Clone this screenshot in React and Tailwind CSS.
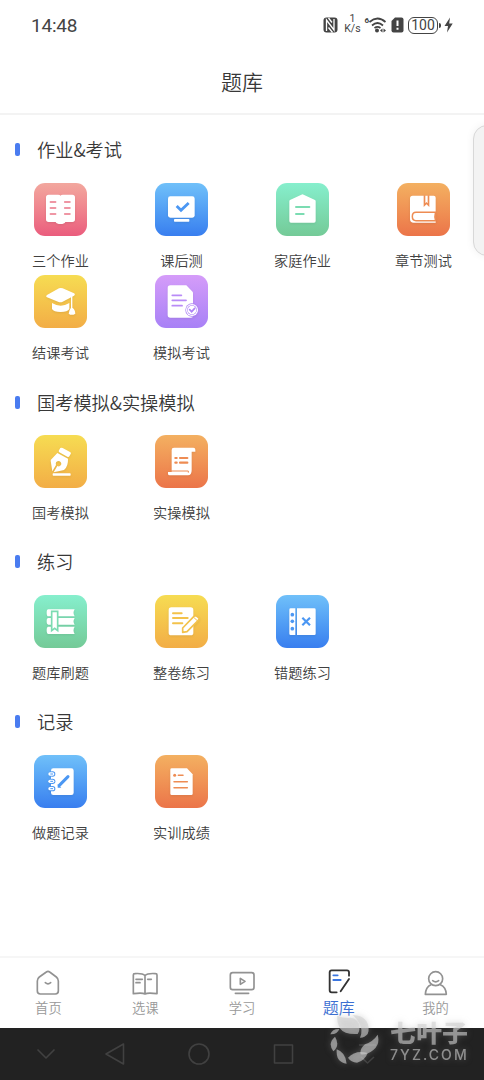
import clsx from "clsx";

const TILE = {
  pink: "from-[#f2a79e] to-[#ea5c7d] text-[#ea7486]",
  blue: "from-[#70c0f9] to-[#397eef] text-[#4b97f3]",
  green: "from-[#86efcd] to-[#74ca97] text-[#7bdcb2]",
  orange: "from-[#f3b061] to-[#eb7449] text-[#ee8c53]",
  yellow: "from-[#f6dc52] to-[#f2ad46] text-[#f3c24b]",
  purple: "from-[#d59cf9] to-[#a881f6] text-[#b98bf7]",
};

// Glyphs share a 159 unit box, white shapes with tile coloured details
const GLYPHS = {
  openBook: (
    <>
      <path fill="#fff" d="M44 35H72Q78 35 79.500 38Q81 35 87 35H115Q123 35 123 43V109Q123 117 115 117H94Q91 123 79.500 123Q68 123 65 117H44Q36 117 36 109V43Q36 35 44 35Z" />
      <path d="M49 57H65M49 75H65M49 93H65M92 57H108M92 75H108M92 93H108" stroke="currentColor" strokeWidth="4.500" strokeLinecap="round" />
    </>
  ),
  monitor: (
    <>
      <rect x="39" y="40" width="80" height="64" rx="7" fill="#fff" />
      <rect x="57" y="108" width="46" height="8" rx="2" fill="#fff" />
      <path d="M65 69L78 82L101 60" fill="none" stroke="currentColor" strokeWidth="8.500" />
    </>
  ),
  house: (
    <>
      <path fill="#fff" d="M42 51L76 35Q79.500 33 83 35L117 51Q119 52 119 55V114Q119 119 114 119H45Q40 119 40 114V55Q40 52 42 51Z" />
      <path d="M60 72H100M60 93H83" stroke="currentColor" strokeWidth="6" strokeLinecap="round" />
    </>
  ),
  closedBook: (
    <>
      <path fill="#fff" d="M47 38H110Q116 38 116 44V119H50Q39 119 39 107V46Q39 38 47 38Z" />
      <path d="M80 37V72L88.500 64L97 72V37H92V61L88.500 57L85 61V37Z" fill="currentColor" />
      <path d="M117 88H57Q46 88 46 100.500Q46 113 57 113H117" fill="none" stroke="currentColor" strokeWidth="4.500" />
      <path d="M113 90Q110 101 113 111H118V90Z" fill="currentColor" />
    </>
  ),
  cap: (
    <>
      <path fill="#fff" d="M39 60L75 40Q80 38 86 40L120 55Q125 58 120 62L86 80Q80 83 74 81L39 67Q34 64 39 60Z" />
      <path fill="#fff" d="M54 84Q80 100 106 84V102Q101 111 80 111Q59 111 54 102Z" />
      <path fill="#fff" d="M111 66L115 64V98Q123 103 124 116Q113 123 104 116Q106 103 111 98Z" />
    </>
  ),
  docCheck: (
    <>
      <path fill="#fff" d="M46 31H94L114 52V122Q114 128 108 128H46Q38 128 38 120V39Q38 31 46 31Z" />
      <path d="M52 61H79M52 76H93M52 92H81" stroke="currentColor" strokeWidth="5.500" strokeLinecap="round" />
      <circle cx="111" cy="105" r="20" fill="#ae83f6" />
      <circle cx="111" cy="105" r="18" fill="#fff" />
      <circle cx="111" cy="105" r="14.500" fill="#ae83f6" />
      <circle cx="111" cy="105" r="13" fill="#fff" />
      <path d="M104 104L110 110L119 100" fill="none" stroke="#ae83f6" strokeWidth="5" strokeLinecap="round" />
    </>
  ),
  pen: (
    <>
      <path fill="#fff" d="M79 39Q82 37 86 39L108 51Q112 53 110 57L106 64Q104 67 100 65L76 52Q73 50 75 46Z" />
      <path fill="#fff" d="M70 54L102 71Q103 94 90 105L59 112L70 93Q78 97 82 88Q82 79 73 78Q63 80 66 90L55 109L50 77Q50 74 53 72Z" />
      <rect x="56" y="115" width="54" height="7" rx="2" fill="#fff" />
    </>
  ),
  scroll: (
    <>
      <path fill="#fff" d="M57 38H115Q121 38 121 44V50H110V106Q110 121 99 121H44Q39 121 39 116V111H50V45Q50 38 57 38Z" />
      <path d="M39 108H100V113" fill="none" stroke="currentColor" strokeWidth="3" />
      <path d="M61 69H65M75 69H97M61 83H65M75 83H97" stroke="currentColor" strokeWidth="6.500" strokeLinecap="round" />
    </>
  ),
  books: (
    <>
      <path fill="#fff" d="M43 43H122Q115 53 122 64H43Q38 64 38 53Q38 43 43 43ZM43 69H122Q115 79 122 89H43Q38 89 38 79Q38 69 43 69ZM43 95H122Q115 106 122 117H43Q38 117 38 106Q38 95 43 95Z" />
      <path d="M53 49H71V107L62 100L53 107Z" fill="#fff" stroke="currentColor" strokeWidth="5" />
    </>
  ),
  notePencil: (
    <>
      <rect x="41" y="37" width="74" height="84" rx="8" fill="#fff" />
      <path d="M54 55H80M54 69H98M54 85H82" stroke="currentColor" strokeWidth="6" strokeLinecap="round" />
      <path d="M83 99L116 65L122 61L133 70L129 77L96 110L83 112Z" fill="#fff" stroke="currentColor" strokeWidth="5" strokeLinejoin="round" />
      <path d="M115 66L128 78" stroke="currentColor" strokeWidth="3" />
    </>
  ),
  wrongBook: (
    <>
      <path fill="#fff" d="M44 40H58V120H44Q40 120 40 116V44Q40 40 44 40ZM63 40H115Q119 40 119 44V116Q119 120 115 120H63Z" />
      <g fill="currentColor">
        <circle cx="49" cy="59" r="5.500" />
        <circle cx="49" cy="79" r="5.500" />
        <circle cx="49" cy="101" r="5.500" />
      </g>
      <path d="M79 68L102 91M102 68L79 91" stroke="currentColor" strokeWidth="6.500" />
    </>
  ),
  notebook: (
    <>
      <path fill="#fff" d="M58 40H112Q119 40 119 47V113Q119 120 112 120H58Q51 120 51 113V47Q51 40 58 40Z" />
      {[57, 79, 101].map((y) => (
        <g key={y}>
          <rect x="46" y={y - 8} width="18" height="16" rx="8" fill="currentColor" />
          <rect x="43" y={y - 5} width="18" height="10" rx="5" fill="#fff" />
          <path d={`M49 ${y}H57`} stroke="currentColor" strokeWidth="3" />
        </g>
      ))}
      <path d="M76 91L102 65" stroke="currentColor" strokeWidth="9" strokeLinecap="round" />
      <path d="M71 87V98H82Z" fill="currentColor" />
    </>
  ),
  report: (
    <>
      <path fill="#fff" d="M50 40H96L113 58V116Q113 120 109 120H50Q46 120 46 116V44Q46 40 50 40Z" />
      <circle cx="59" cy="61" r="4.500" fill="currentColor" />
      <path d="M70 61H84M57 80H97M57 98H97" stroke="currentColor" strokeWidth="4.500" strokeLinecap="round" />
    </>
  ),
};

const SECTIONS = [
  {
    title: "作业&考试",
    items: [
      { label: "三个作业", color: "pink", glyph: "openBook" },
      { label: "课后测", color: "blue", glyph: "monitor" },
      { label: "家庭作业", color: "green", glyph: "house" },
      { label: "章节测试", color: "orange", glyph: "closedBook" },
      { label: "结课考试", color: "yellow", glyph: "cap" },
      { label: "模拟考试", color: "purple", glyph: "docCheck" },
    ],
  },
  {
    title: "国考模拟&实操模拟",
    items: [
      { label: "国考模拟", color: "yellow", glyph: "pen" },
      { label: "实操模拟", color: "orange", glyph: "scroll" },
    ],
  },
  {
    title: "练习",
    items: [
      { label: "题库刷题", color: "green", glyph: "books" },
      { label: "整卷练习", color: "yellow", glyph: "notePencil" },
      { label: "错题练习", color: "blue", glyph: "wrongBook" },
    ],
  },
  {
    title: "记录",
    items: [
      { label: "做题记录", color: "blue", glyph: "notebook" },
      { label: "实训成绩", color: "orange", glyph: "report" },
    ],
  },
];

const TABS = [
  {
    label: "首页",
    icon: <path d="M37 9Q42 5 47 9L67 24Q73 29 73 36V66Q73 75 64 75H19Q10 75 10 66V36Q10 29 16 24ZM34 41Q42 48 50 41" />,
  },
  {
    label: "选课",
    icon: <path d="M42 20Q34 12 11 14Q7 14 7 18V74Q34 70 42 75Q50 70 78 74V18Q78 14 74 14Q50 12 42 20ZM42 20V75M15 31H34M15 41H27M50 31H61" />,
  },
  {
    label: "学习",
    icon: <path d="M14 11H71Q78 11 78 18V55Q78 62 71 62H14Q7 62 7 55V18Q7 11 14 11ZM22 73H62M37 28V46L51 37Z" />,
  },
  {
    label: "题库",
    active: true,
    icon: (
      <>
        <path d="M72 20V10Q72 4 66 4H20Q14 4 14 10V64Q14 70 20 70H35M72 30L47 67" stroke="#333" strokeWidth="5.500" />
        <path d="M25 19H38M25 33H47" stroke="#3b76e0" strokeWidth="5.500" />
      </>
    ),
  },
  {
    label: "我的",
    icon: (
      <>
        <circle cx="41" cy="29" r="21" />
        <path d="M32 35Q41 42 50 35M27 47Q11 54 10 76H73Q72 54 55 47" />
      </>
    ),
  },
];

function StatusBar() {
  return (
    <div className="flex h-[50px] items-center justify-between pl-[31px] pr-[31px] font-[Roboto] font-normal text-[#444]">
      <span className="text-[19px] leading-none tracking-[-0.2px]">14:48</span>
      <div className="flex items-center">
        <svg className="h-4 w-[15px]" viewBox="0 0 15 16" fill="none" stroke="currentColor">
          <rect x="0.500" y="0.500" width="14" height="15" rx="3" fill="currentColor" stroke="none" />
          <path d="M3.500 14V3L11 13V2M5.500 1L9 5.500M5.500 10.500L9.500 15.500" stroke="#fff" strokeWidth="1.300" />
        </svg>
        <div className="ml-[5px] mt-px flex w-[18px] flex-col items-center text-[10.5px] leading-[12px]">
          <span className="-mt-1">1</span>
          <span className="-mt-[2px]">K/s</span>
        </div>
        <span className="mb-[9px] ml-[3px] text-[8px] font-bold leading-none">6</span>
        <svg className="h-[18px] w-[18px]" viewBox="0 0 18 18" fill="none" stroke="currentColor" strokeWidth="1.700">
          <path d="M0.500 6Q8.500 -1 16.500 6M3 9.500Q8.500 4.500 14 9.500M5.500 12Q8.500 9.800 11.500 12" />
          <circle cx="8" cy="14.500" r="2" fill="currentColor" stroke="none" />
          <path d="M11 14.500L13.500 12.500V16.500ZM17 14.500L14.500 12.500V16.500Z" fill="currentColor" stroke="none" />
        </svg>
        <svg className="ml-[4px] h-4 w-[13px]" viewBox="0 0 13 16">
          <path d="M4 0.500H10.500Q12.500 0.500 12.500 2.500V13.500Q12.500 15.500 10.500 15.500H2.500Q0.500 15.500 0.500 13.500V4Z" fill="currentColor" />
          <path d="M6.500 3.500V9M6.500 10.800V12.800" stroke="#fff" strokeWidth="2" />
        </svg>
        <div className="ml-[4px] flex h-[17px] w-[30px] items-center justify-center rounded-[6px] border-[1.5px] border-[#444] text-[14px] leading-none">
          100
        </div>
        <div className="ml-px h-[5px] w-[2px] rounded-r-sm bg-[#444]" />
        <svg className="ml-[3px] h-[16px] w-[9px]" viewBox="0 0 9 16">
          <path d="M6 0.500L0.500 9H4L3 15.500L8.700 6.500H5.200Z" fill="currentColor" />
        </svg>
      </div>
    </div>
  );
}

function Tile({ item }) {
  return (
    <div className="flex h-[92.7px] flex-col items-center">
      <div className={clsx("h-[53px] w-[53px] rounded-[11px] bg-gradient-to-b", TILE[item.color])}>
        <svg className="h-full w-full drop-shadow-[0_1px_1px_rgba(0,0,0,0.08)]" viewBox="0 0 159 159">
          {GLYPHS[item.glyph]}
        </svg>
      </div>
      <span className="mt-[14px] text-[14.2px] leading-5 text-[#404040]">{item.label}</span>
    </div>
  );
}

function Section({ section }) {
  return (
    <section>
      <div className="flex h-[67.2px] items-center pl-[15px]">
        <span className="mt-px h-[13px] w-[5px] rounded-[2px] bg-[#4a7cf0]" />
        <h2 className="ml-[17px] text-[18.2px] leading-6 text-[#383838]">{section.title}</h2>
      </div>
      <div className="grid grid-cols-4">
        {section.items.map((item) => (
          <Tile key={item.label} item={item} />
        ))}
      </div>
    </section>
  );
}

function TabBar() {
  return (
    <nav className="grid h-[72px] grid-cols-5 border-t-2 border-[#f6f6f6] bg-white pt-[11px]">
      {TABS.map((tab) => (
        <div key={tab.label} className="flex flex-col items-center">
          <svg
            className="h-7 w-7"
            viewBox="0 0 84 84"
            fill="none"
            stroke="#929292"
            strokeWidth="5"
            strokeLinecap="round"
            strokeLinejoin="round"
          >
            {tab.icon}
          </svg>
          <span className={clsx("leading-5", tab.active ? "text-[16px] text-[#3c6fd2]" : "mt-px text-[13.3px] text-[#999]")}>
            {tab.label}
          </span>
        </div>
      ))}
    </nav>
  );
}

function SystemBar() {
  return (
    <div className="h-[52px] bg-[#222]">
      <svg className="h-[52px] w-[400px]" viewBox="0 0 400 52" fill="none" stroke="#414141" strokeWidth="1.600" strokeLinejoin="round">
        <path d="M37.500 21.500L46 30L54.500 21.500" />
        <path d="M123.500 16V36L106 26Z" />
        <circle cx="199" cy="26" r="10" />
        <rect x="274.500" y="17" width="18" height="18" />
        <path d="M359 17H376M361 29L367.500 35L374 29" />
      </svg>
    </div>
  );
}

function Watermark() {
  return (
    <div className="absolute bottom-[14px] left-[330px] flex items-start drop-shadow-[0_0_3px_rgba(150,150,150,0.6)]">
      <svg className="h-[52px] w-[50px]" viewBox="0 0 150 156" fill="#d0d0d0" fillOpacity="0.6">
        <path d="M22 5Q45 15 62 11Q82 14 87 31Q91 49 83 60Q43 62 31 44Q20 26 22 5Z" />
        <path d="M68 3Q96 3 109 21Q121 40 113 60Q103 72 90 71Q100 50 88 27Q81 14 68 3Z" />
        <path d="M143 62Q151 90 131 107Q112 123 92 121Q88 105 105 91Q130 82 143 62Z" />
        <path d="M54 131Q77 107 113 117Q105 140 81 146Q63 145 54 131Z" />
        <path d="M20 106Q47 115 50 149Q17 146 20 106Z" />
        <path d="M15 68Q31 94 10 112Q-8 88 15 68Z" />
        <path d="M28 45Q22 62 1 61Q7 44 28 45Z" />
      </svg>
      <div className="ml-[10px] mt-[6px] flex flex-col text-[#d0d0d0]/60">
        <span className="origin-center scale-y-90 text-[26px] font-black leading-[24px]">七叶子</span>
        <span className="mt-[3px] font-[Inter] text-[14px] font-medium leading-[16px] tracking-[2.1px]">7YZ.COM</span>
      </div>
    </div>
  );
}

export default function App() {
  return (
    <div className="relative flex h-[1080px] w-[484px] flex-col overflow-hidden bg-white font-['Noto_Sans_CJK_SC',sans-serif] font-[350]">
      <StatusBar />
      <header className="flex h-[65.4px] items-center justify-center border-b-2 border-[#f3f3f3] pb-[2px]">
        <h1 className="text-[21px] leading-7 text-[#383838]">题库</h1>
      </header>
      <main className="flex-1">
        {SECTIONS.map((section) => (
          <Section key={section.title} section={section} />
        ))}
      </main>
      <TabBar />
      <SystemBar />

      {/* Edge panel handle */}
      <div className="absolute left-[473px] top-[125px] h-[131px] w-[30px] rounded-[14px] border border-[#d8d8d8] bg-[#f3f3f3] shadow-[0_0_8px_rgba(0,0,0,0.06)]" />
      <Watermark />
    </div>
  );
}
